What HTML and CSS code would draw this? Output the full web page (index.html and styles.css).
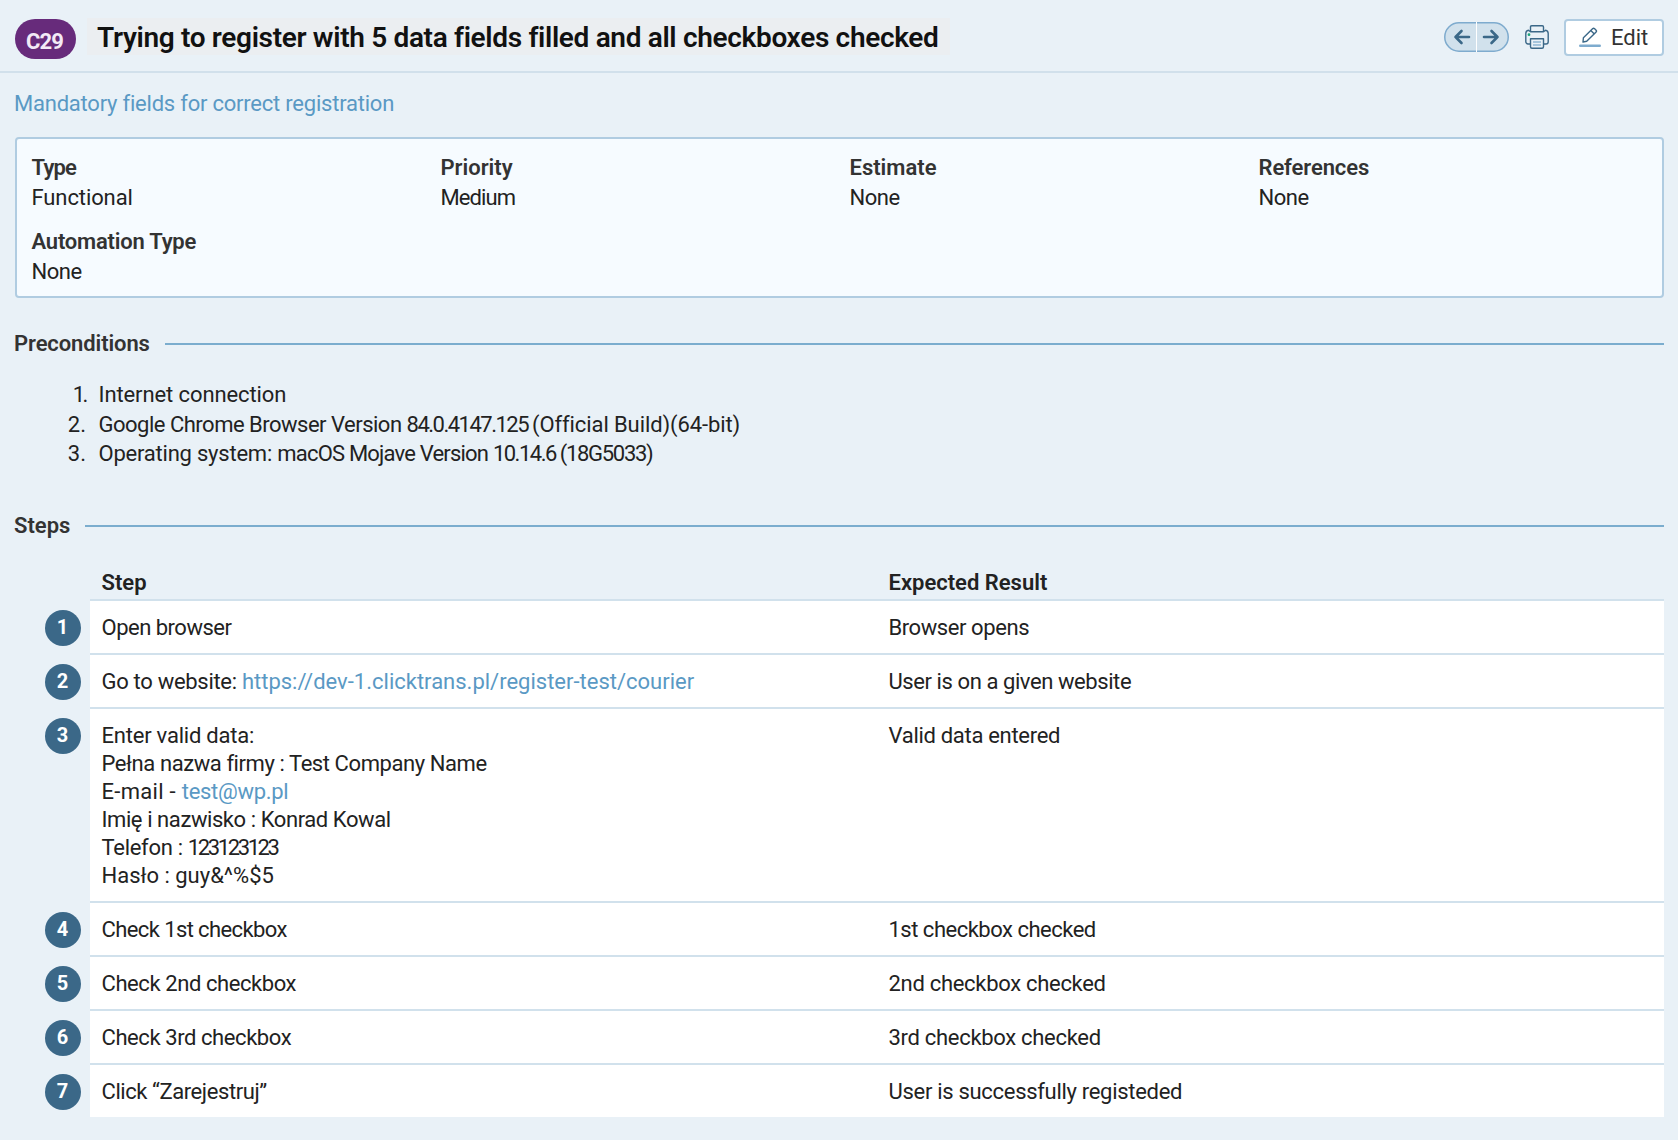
FILE: index.html
```html
<!DOCTYPE html>
<html lang="en">
<head>
<meta charset="utf-8">
<title>C29 Test case</title>
<link rel="stylesheet" href="styles.css">
</head>
<body>
<header class="header">
  <span class="badge">C29</span>
  <h1 class="title">Trying to register with 5 data fields filled and all checkboxes checked</h1>
  <div class="actions">
    <div class="pager">
      <svg width="65" height="30" viewBox="0 0 65 30" fill="none">
        <rect x=".75" y=".75" width="63.5" height="28.5" rx="14.25" fill="#d1e1ec" stroke="#7eabce" stroke-width="1.5"/>
        <path d="M32.5 0v30" stroke="#fff" stroke-width="1"/>
        <g stroke="#3b6888" stroke-width="2.6" stroke-linecap="round" stroke-linejoin="round">
          <path d="M25 15H11.5M17.500 9l-6 6 6 6"/>
          <path d="M40 15h13.500M47.500 9l6 6-6 6"/>
        </g>
      </svg>
    </div>
    <svg class="printer" width="24" height="24" viewBox="0 0 24 24" fill="none" stroke="#3b6888" stroke-width="1.4" stroke-linejoin="round">
      <path d="M5.500 19H3a2.200 2.200 0 0 1-2.200-2.200V8.500Q.8 5.500 3.500 5.200L5.500 6.800h13l2-1.600Q23.200 5.500 23.200 8.500v8.300A2.200 2.200 0 0 1 21 19h-2.500"/>
      <path d="M5.500 6.800V2q0-1.200 1.200-1.200h10.600q1.200 0 1.200 1.200v4.800"/>
      <path d="M5.500 13.700h13v8q0 1.500-1.500 1.500H7q-1.500 0-1.500-1.500z"/>
      <path d="M8 17h8M8 20h8" stroke="#8eb6d4"/>
      <circle cx="4" cy="9.700" r="1.400" fill="#1ba37a" stroke="none"/>
    </svg>
    <button class="edit">
      <svg width="22" height="22" viewBox="0 0 22 22" fill="none" stroke="#3b6888" stroke-width="1.400" stroke-linejoin="round">
        <path d="M4 15l.4-4.200L13.800 1.600q.8-.7 1.600 0l1.700 1.700q.8.800 0 1.600L7.700 14.200z"/>
        <path d="M11.800 3.600l3.500 3.500"/>
        <path d="M1.200 18.800h19.600" stroke="#7eabce" stroke-width="2.400" stroke-linecap="round"/>
      </svg>
      <span>Edit</span>
    </button>
  </div>
</header>

<main class="content">
  <nav class="crumb"><a class="t2" href="#">Mandatory fields for correct registration</a></nav>

  <dl class="props">
    <div><dt class="t8">Type</dt><dd class="t1">Functional</dd></div>
    <div><dt>Priority</dt><dd class="t9">Medium</dd></div>
    <div><dt>Estimate</dt><dd class="t5">None</dd></div>
    <div><dt class="t1">References</dt><dd class="t5">None</dd></div>
    <div><dt class="t2">Automation Type</dt><dd class="t5">None</dd></div>
  </dl>

  <h2 class="section t1">Preconditions</h2>
  <ol class="conditions">
    <li><span class="num t24">1.</span><span class="t1">Internet connection</span></li>
    <li><span class="num">2.</span><span><span class="t5">Google Chrome Browser Version </span><span class="t15">84.0.4147.125 </span><span class="t1">(Official Build)(64-bit)</span></span></li>
    <li><span class="num">3.</span><span><span class="t2">Operating system: </span><span class="t8">macOS Mojave Version </span><span class="t15">10.14.6 </span><span class="t13">(18G5033)</span></span></li>
  </ol>

  <h2 class="section">Steps</h2>
  <div class="steps">
    <div class="head"><span></span><b>Step</b><b>Expected Result</b></div>
    <div class="row"><i class="dot">1</i><p class="t5">Open browser</p><p class="t4">Browser opens</p></div>
    <div class="row"><i class="dot">2</i><p><span class="t3">Go to website: </span><a href="#">https://dev-1.clicktrans.pl/register-test/courier</a></p><p class="t4">User is on a given website</p></div>
    <div class="row"><i class="dot">3</i><p><span class="t2">Enter valid data:</span><br><span class="t4">Pełna nazwa firmy : Test Company Name</span><br><span class="wide">E-mail - </span><a class="t3" href="#">test@wp.pl</a><br><span class="t4">Imię i nazwisko : Konrad Kowal</span><br><span class="t3">Telefon : </span><span class="t24">123123123</span><br>Hasło : guy&amp;^%$5</p><p class="t3">Valid data entered</p></div>
    <div class="row"><i class="dot">4</i><p class="t6">Check 1st checkbox</p><p class="t5">1st checkbox checked</p></div>
    <div class="row"><i class="dot">5</i><p class="t4">Check 2nd checkbox</p><p class="t3">2nd checkbox checked</p></div>
    <div class="row"><i class="dot">6</i><p class="t4">Check 3rd checkbox</p><p class="t3">3rd checkbox checked</p></div>
    <div class="row"><i class="dot">7</i><p class="t4">Click “Zarejestruj”</p><p class="t3">User is successfully registeded</p></div>
  </div>
</main>
</body>
</html>
```
FILE: styles.css
```css
* { box-sizing: border-box; }
body {
  margin: 0;
  min-height: 1140px;
  background: #e9f1f7;
  color: #222;
  font: 22px/28px Roboto, "Liberation Sans", sans-serif;
}
h1, h2, p, dl, dd, ol { margin: 0; padding: 0; }
a { color: #5a99c4; text-decoration: none; }

/* Tracking steps, in tenths of a pixel */
.t1 { letter-spacing: -.1px; }
.t2 { letter-spacing: -.22px; }
.t3 { letter-spacing: -.3px; }
.t4 { letter-spacing: -.42px; }
.t5 { letter-spacing: -.5px; }
.t6 { letter-spacing: -.6px; }
.t8 { letter-spacing: -.8px; }
.t9 { letter-spacing: -.9px; }
.t13 { letter-spacing: -1.3px; }
.t15 { letter-spacing: -1.5px; }
.t24 { letter-spacing: -2.4px; }
.wide { letter-spacing: .3px; }

.header {
  display: flex;
  align-items: flex-start;
  height: 73px;
  padding: 18px 14px 0 15px;
  border-bottom: 2px solid #d1e0eb;
}
.badge {
  width: 61px;
  height: 40px;
  margin-top: 1px;
  padding: 5px 2px 0 0;
  border-radius: 20px;
  background: #672b7b;
  color: #f3eaf6;
  font-weight: 700;
  line-height: 35px;
  letter-spacing: -.9px;
  text-align: center;
}
.title {
  height: 37px;
  margin-left: 11px;
  padding: 2px 11px 0 10px;
  background: #ebeef1;
  color: #111;
  font-size: 28px;
  font-weight: 600;
  line-height: 35px;
  letter-spacing: -.33px;
  white-space: nowrap;
}
.actions { display: flex; margin-left: auto; }
.pager { height: 30px; margin: 4px 16px 0 0; }
.pager svg { display: block; }
.printer { margin: 7px 15px 0 0; }
.edit {
  display: flex;
  align-items: center;
  gap: 10px;
  width: 100px;
  height: 37px;
  margin-top: 1px;
  padding: 0 0 0 13px;
  border: 2px solid #b0cce1;
  border-radius: 4px;
  background: #fff;
  color: #333;
  font: inherit;
}

.content { padding: 17px 14px 0 15px; }
.crumb { height: 47px; margin-left: -1px; }
.props {
  display: grid;
  grid-template-columns: repeat(4, 409px);
  row-gap: 14px;
  height: 161px;
  padding: 14px 0 0 14.500px;
  border: 2px solid #b0cce1;
  border-radius: 4px;
  background: #f6fbff;
  line-height: 30px;
  align-content: start;
}
.props dt { color: #333; font-weight: 600; }

.section {
  display: flex;
  align-items: center;
  gap: 15px;
  height: 28px;
  margin: 32px 0 0 -1px;
  color: #333;
  font-size: 22px;
  font-weight: 600;
}
.section::after { content: ""; flex: 1; height: 2px; background: #7badce; }
.conditions {
  height: 122px;
  padding-top: 22px;
  list-style: none;
  line-height: 29.700px;
}
.conditions li { display: flex; gap: 12.500px; }
.conditions .num { width: 71px; text-align: right; }

.steps { padding-top: 28px; }
.head, .row { display: grid; grid-template-columns: 75px 787px 787px; }
.head { height: 31px; padding-top: 1px; font-weight: 600; }
.head b { padding-left: 11.500px; font-weight: 600; }
.row p {
  padding: 13px 0 11px 11.500px;
  border-top: 2px solid #d1e1ec;
  background: #fff;
}
.dot {
  width: 36px;
  height: 36px;
  margin: 11px 0 0 30px;
  padding-right: 1px;
  border-radius: 50%;
  background: #3b6888;
  color: #fff;
  font-size: 20px;
  font-style: normal;
  font-weight: 700;
  line-height: 34px;
  text-align: center;
}
```
